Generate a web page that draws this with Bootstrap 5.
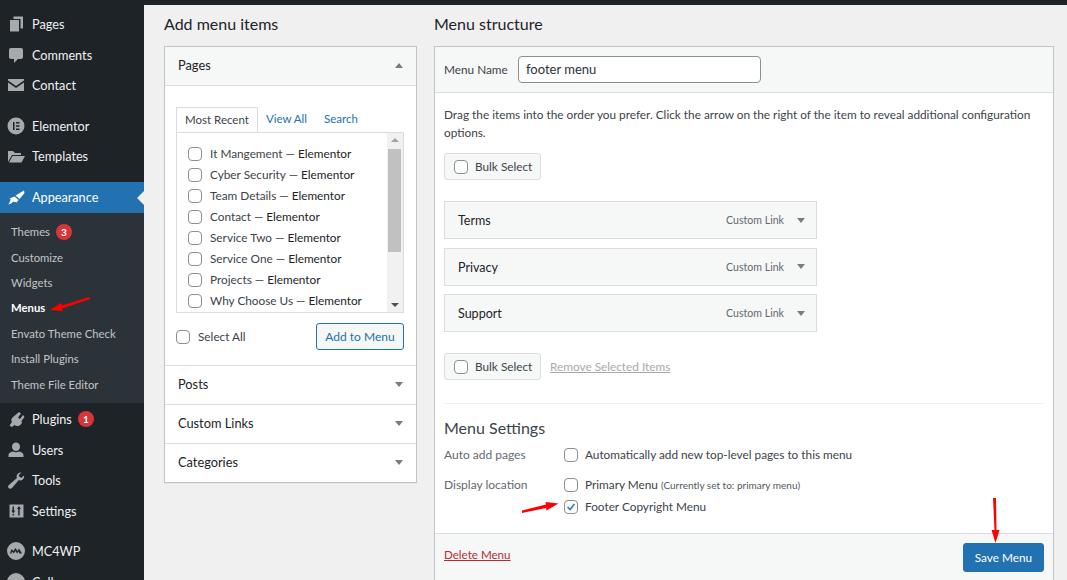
<!DOCTYPE html>
<html lang="en">
<head>
  <meta charset="UTF-8">
  <meta name="viewport" content="width=device-width, initial-scale=1.0">
  <title>Menus</title>
  <link href="https://cdn.jsdelivr.net/npm/bootstrap@5.3.3/dist/css/bootstrap.min.css" rel="stylesheet">
  <style>
    html, body { height: 100%; overflow: hidden; }
    body { background: #f0f0f1; color: #3c434a; font-family: "Lato", "Open Sans", sans-serif; font-size: 11.800px; line-height: 18px; }
    a { color: #2271b1; text-decoration: none; }
    .wp-top { height: 5px; background: #1d2327; }
    .wp-shell { height: 575px; position: relative; }

    .side { width: 144px; flex: none; background: #1d2327; color: #f0f0f1; padding-top: 4px; font-size: 12.700px; }
    .side-item { height: 30.500px; padding-left: 6px; gap: 6px; }
    .side-item svg { width: 20px; height: 20px; fill: #a7aaad; flex: none; }
    .side-gap { margin-top: 10px; }
    .side-active { background: #2271b1; color: #fff; position: relative; height: 31px; margin-top: 10px; }
    .side-active svg { fill: #fff; }
    .side-active::after { content: ""; position: absolute; right: 0; top: 9px; border: 7px solid transparent; border-right-color: #f0f0f1; border-left-width: 0; }
    .side-sub { background: #2c3338; color: #c3c4c7; padding: 7px 0 6px 11px; margin-bottom: 1px; font-size: 11.300px; }
    .side-sub > div { height: 25.400px; display: flex; align-items: center; gap: 6px; }
    .side-sub .cur { color: #fff; font-weight: 700; }
    .count-pill { width: 16px; height: 16px; border-radius: 50%; background: #d63638; color: #fff; font-size: 10px; font-weight: 700; line-height: 16px; text-align: center; padding: 0; }

    .main { padding: 9px 0 0 20px; }
    .col-left { width: 253px; margin-right: 17px; flex: none; }
    .col-right { width: 620px; flex: none; }
    .title { font-size: 16px; line-height: 20px; color: #1d2327; margin: 0 0 12px; font-weight: 400; height: 20px; }
    .panel { background: #fff; border: 1px solid #c3c4c7; border-radius: 0; box-shadow: 0 1px 1px rgba(0,0,0,.04); }
    .acc-head { height: 39px; padding: 0 13px 2px; font-size: 12.800px; color: #1d2327; border-top: 1px solid #dcdcde; }
    .acc-head.first { height: 39px; border-top: 0; background: #f6f7f7; border-bottom: 1px solid #dcdcde; }
    .arrow-dn, .arrow-up { width: 0; height: 0; border: 4px solid transparent; border-bottom-width: 0; border-top: 5px solid #787c82; }
    .arrow-up { border-top: 0; border-bottom: 5px solid #787c82; border-left-width: 4px; }
    .acc-body { padding: 21px 12px 15px 11px; height: 279px; }
    .tabbar { height: 25px; font-size: 11.500px; }
    .tabbar > * { padding: 0 8px; line-height: 24px; }
    .tabbar a { margin-right: 1px; }
    .tabbar .on { border: 1px solid #dcdcde; border-bottom: 0; background: #fff; height: 25px; margin-bottom: -1px; position: relative; color: #3c434a; }
    .picklist { height: 181px; border: 1px solid #dcdcde; padding: 10px 0 0 11px; position: relative; overflow: hidden; }
    .pick-row { height: 21px; gap: 8px; white-space: nowrap; }
    .pick-row b { font-weight: 400; color: #1d2327; }
    .sbar { position: absolute; right: 0; top: 0; bottom: 0; width: 16px; background: #f1f1f1; }
    .sbar i { position: absolute; left: 1px; top: 16px; width: 13px; height: 103px; background: #c1c1c1; }
    .sbar u { position: absolute; left: 4px; width: 0; height: 0; border: 4px solid transparent; }
    .sbar .up { top: 5px; border-top: 0; border-bottom: 4px solid #a3a3a3; }
    .sbar .dn { bottom: 5px; border-bottom: 0; border-top: 4px solid #505050; }
    .pick-foot { margin-top: 10px; }
    .form-check-input.wp-ck { width: 14px; height: 14px; margin: 0; border: 1px solid #8c8f94; border-radius: 4px; background-color: #fff; flex: none; float: none; }
    .form-check-input.wp-ck:checked { background-color: #fff; border-color: #8c8f94; background-image: url("data:image/svg+xml,%3Csvg xmlns='http://www.w3.org/2000/svg' viewBox='0 0 14 14'%3E%3Cpath d='M3 7l3 3 5-6.500' fill='none' stroke='%233582c4' stroke-width='2'/%3E%3C/svg%3E"); background-size: 100%; }
    .btn-outline-wp { font-size: 12px; line-height: 25px; padding: 0; width: 88px; height: 27px; border: 1px solid #2271b1; color: #2271b1; background: #f6f7f7; border-radius: 3px; white-space: nowrap; }

    .name-bar { height: 46px; background: #f6f7f7; border-bottom: 1px solid #dcdcde; padding: 0 9px; gap: 10px; }
    .name-bar label { width: 64px; white-space: nowrap; }
    .name-input { width: 243px; height: 27px; border: 1px solid #8c8f94; border-radius: 4px; padding: 0 7px; font-size: 13px; line-height: 25px; background: #fff; color: #2c3338; }
    .struct { padding: 13px 9px 0; height: 440px; }
    .struct p { margin: 0 0 11px; }
    .bulk { width: 97px; height: 27px; border: 1px solid #dcdcde; border-radius: 3px; background: #f6f7f7; padding-left: 9px; gap: 7px; }
    .bulk-gap { margin-bottom: 21px; }
    .menu-item { width: 373px; height: 38px; border: 1px solid #dcdcde; background: #f6f7f7; padding: 0 11px 0 13px; margin-bottom: 8.500px; color: #1d2327; }
    .menu-item span { font-size: 12.500px; color: #1d2327; padding-top: 2px; }
    .menu-item small { font-size: 10.600px; color: #646970; margin-right: 13px; }
    .rm-link { color: #a7aaad; text-decoration: underline; margin-left: 9px; }
    .bulk-row { margin-top: 21px; }
    .rule { border-top: 1px solid #f0f0f1; margin: 23px 0 14px; }
    .set-title { font-size: 16px; line-height: 19px; color: #3c434a; margin-bottom: 7px; }
    .set-row { min-height: 22px; }
    .set-label { width: 120px; flex: none; color: #646970; font-size: 12px; }
    .set-opt { gap: 7px; }
    .opt-note { font-size: 10px; color: #50575e; }
    .foot-bar { height: 50px; background: #f6f7f7; border-top: 1px solid #dcdcde; padding: 9px 9px 0; }
    .del-link { color: #b32d2e; text-decoration: underline; margin-top: 3px; font-size: 11.600px; }
    .btn-save { width: 81px; height: 29px; padding: 0; font-size: 11.800px; line-height: 27px; background: #2271b1; border: 1px solid #2271b1; color: #fff; border-radius: 3px; }
    .anno { position: absolute; left: 0; top: -5px; pointer-events: none; }
  </style>
</head>
<body>
  <div class="wp-top"></div>
  <div class="wp-shell d-flex">

    <!-- admin menu -->
    <div class="side">
      <div class="side-item d-flex align-items-center">
        <svg viewBox="0 0 20 20"><path d="M7.500 2.500H17v12h-2.500V5H7.500zM4 6h9v11.500H4z"/></svg>Pages
      </div>
      <div class="side-item d-flex align-items-center">
        <svg viewBox="0 0 20 20"><path d="M5 3h10a2 2 0 0 1 2 2v7a2 2 0 0 1-2 2h-3l-4 4v-4H5a2 2 0 0 1-2-2V5a2 2 0 0 1 2-2z"/></svg>Comments
      </div>
      <div class="side-item d-flex align-items-center">
        <svg viewBox="0 0 20 20"><path d="M2 4h16v1.500l-8 5.500-8-5.500zM2 7.500l8 5.500 8-5.500V16H2z"/></svg>Contact
      </div>
      <div class="side-item side-gap d-flex align-items-center">
        <svg viewBox="0 0 20 20"><path fill-rule="evenodd" d="M10 1.500a8.500 8.500 0 1 1 0 17 8.500 8.500 0 0 1 0-17zM7 6v8h1.500V6zm3 0v1.500h3.500V6zm0 3.200v1.500h3.500V9.200zm0 3.300V14h3.500v-1.500z"/></svg>Elementor
      </div>
      <div class="side-item d-flex align-items-center">
        <svg viewBox="0 0 20 20"><path d="M2 5h5l2 2h6v2H6l-4 7zM6.500 10H19l-3.500 6.500H3z"/></svg>Templates
      </div>
      <div class="side-active side-item d-flex align-items-center">
        <svg viewBox="0 0 20 20"><path d="M18 3.500l.5 2.500-5 6-4-3.500zM8.500 9.500l4 3.500-2 2.500-1.500-.7-.7.5-1-.8c-1.300 1.500-2.800 2.500-5 3 1-1.500 1.800-3 2.400-5L3.500 11.500z"/></svg>Appearance
      </div>
      <div class="side-sub">
        <div>Themes <span class="count-pill">3</span></div>
        <div>Customize</div>
        <div>Widgets</div>
        <div class="cur">Menus</div>
        <div>Envato Theme Check</div>
        <div>Install Plugins</div>
        <div>Theme File Editor</div>
      </div>
      <div class="side-item d-flex align-items-center">
        <svg viewBox="0 0 20 20"><path d="M13 3l2 1.500-3 4 2 1.500 3-4 1.500 2-3 4c1 1.500 0 3.500-2 4.500s-3.500.5-5-.5L6 18l-2.500-1.500L6 13c-1-1.500-1-3 .5-4.500z"/></svg>Plugins <span class="count-pill">1</span>
      </div>
      <div class="side-item d-flex align-items-center">
        <svg viewBox="0 0 20 20"><path d="M10 2.500a4 4 0 0 1 4 4.200c0 2.300-1.700 4.300-4 4.300S6 9 6 6.700a4 4 0 0 1 4-4.200zM2.500 17v-2c0-2 3-3.300 4.500-3.500 1.500 1 4.500 1 6 0 1.500.2 4.500 1.500 4.500 3.500v2z"/></svg>Users
      </div>
      <div class="side-item d-flex align-items-center">
        <svg viewBox="0 0 20 20"><path d="M18 5.500c.5 2-.5 4-2.500 4.700-1 .3-2 .2-2.700-.1L6 18c-1 1-2.500 1-3.300.1-.9-1-.8-2.300.2-3.200l8-7c-.4-.9-.4-2 0-3 .8-1.700 2.600-2.700 4.600-2.300L12.800 5l.7 2 2 .7z"/></svg>Tools
      </div>
      <div class="side-item d-flex align-items-center">
        <svg viewBox="0 0 20 20"><path fill-rule="evenodd" d="M3.500 3.500h14v13h-14zM6.500 5.500v4H5.300l2 3 1.900-3H8v-4zM13 5l-2 3h1.200v6.500h1.500V8H15zM6.500 13v1.500H8V13z"/></svg>Settings
      </div>
      <div class="side-item side-gap d-flex align-items-center">
        <svg viewBox="0 0 20 20"><path fill-rule="evenodd" d="M10 1a9 9 0 1 1 0 18 9 9 0 0 1 0-18zM4 12.500l1.500-4.500 2 2L9.500 7l2 3 1.500-2.500 3 5h-2.500L12.500 10.500l-1.300 2L9.300 10l-1.500 2.500L6 10.500l-.5 2z"/></svg>MC4WP
      </div>
      <div class="side-item d-flex align-items-center">
        <svg viewBox="0 0 20 20"><circle cx="10" cy="10" r="9"/></svg>Collapse
      </div>
    </div>

    <div class="main d-flex">
      <!-- left column -->
      <div class="col-left">
        <h2 class="title">Add menu items</h2>
        <div class="panel">
          <div class="acc-head first d-flex align-items-center justify-content-between">Pages<span class="arrow-up"></span></div>
          <div class="acc-body">
            <div class="tabbar d-flex">
              <div class="on">Most Recent</div>
              <a href="#">View All</a>
              <a href="#">Search</a>
            </div>
            <div class="picklist">
              <div class="pick-row d-flex align-items-center"><input class="form-check-input wp-ck" type="checkbox"><div>It Mangement — <b>Elementor</b></div></div>
              <div class="pick-row d-flex align-items-center"><input class="form-check-input wp-ck" type="checkbox"><div>Cyber Security — <b>Elementor</b></div></div>
              <div class="pick-row d-flex align-items-center"><input class="form-check-input wp-ck" type="checkbox"><div>Team Details — <b>Elementor</b></div></div>
              <div class="pick-row d-flex align-items-center"><input class="form-check-input wp-ck" type="checkbox"><div>Contact — <b>Elementor</b></div></div>
              <div class="pick-row d-flex align-items-center"><input class="form-check-input wp-ck" type="checkbox"><div>Service Two — <b>Elementor</b></div></div>
              <div class="pick-row d-flex align-items-center"><input class="form-check-input wp-ck" type="checkbox"><div>Service One — <b>Elementor</b></div></div>
              <div class="pick-row d-flex align-items-center"><input class="form-check-input wp-ck" type="checkbox"><div>Projects — <b>Elementor</b></div></div>
              <div class="pick-row d-flex align-items-center"><input class="form-check-input wp-ck" type="checkbox"><div>Why Choose Us — <b>Elementor</b></div></div>
              <div class="sbar"><u class="up"></u><i></i><u class="dn"></u></div>
            </div>
            <div class="pick-foot d-flex align-items-center justify-content-between">
              <div class="d-flex align-items-center gap-2"><input class="form-check-input wp-ck" type="checkbox">Select All</div>
              <button class="btn btn-outline-wp" type="button">Add to Menu</button>
            </div>
          </div>
          <div class="acc-head d-flex align-items-center justify-content-between">Posts<span class="arrow-dn"></span></div>
          <div class="acc-head d-flex align-items-center justify-content-between">Custom Links<span class="arrow-dn"></span></div>
          <div class="acc-head d-flex align-items-center justify-content-between">Categories<span class="arrow-dn"></span></div>
        </div>
      </div>

      <!-- right column -->
      <div class="col-right">
        <h2 class="title">Menu structure</h2>
        <div class="panel">
          <div class="name-bar d-flex align-items-center">
            <label>Menu Name</label>
            <div class="name-input">footer menu</div>
          </div>
          <div class="struct">
            <p>Drag the items into the order you prefer. Click the arrow on the right of the item to reveal additional configuration options.</p>
            <div class="bulk bulk-gap d-flex align-items-center"><input class="form-check-input wp-ck" type="checkbox">Bulk Select</div>

            <div class="menu-item d-flex align-items-center justify-content-between"><span>Terms</span><div class="d-flex align-items-center"><small>Custom Link</small><i class="arrow-dn"></i></div></div>
            <div class="menu-item d-flex align-items-center justify-content-between"><span>Privacy</span><div class="d-flex align-items-center"><small>Custom Link</small><i class="arrow-dn"></i></div></div>
            <div class="menu-item d-flex align-items-center justify-content-between"><span>Support</span><div class="d-flex align-items-center"><small>Custom Link</small><i class="arrow-dn"></i></div></div>

            <div class="bulk-row d-flex align-items-center">
              <div class="bulk d-flex align-items-center"><input class="form-check-input wp-ck" type="checkbox">Bulk Select</div>
              <a class="rm-link" href="#">Remove Selected Items</a>
            </div>
            <div class="rule"></div>
            <div class="set-title">Menu Settings</div>
            <div class="set-row d-flex align-items-center"><div class="set-label">Auto add pages</div><div class="set-opt d-flex align-items-center"><input class="form-check-input wp-ck" type="checkbox">Automatically add new top-level pages to this menu</div></div>
            <div class="set-row d-flex align-items-center mt-2"><div class="set-label">Display location</div><div class="set-opt d-flex align-items-center"><input class="form-check-input wp-ck" type="checkbox"><div>Primary Menu <span class="opt-note">(Currently set to: primary menu)</span></div></div></div>
            <div class="set-row d-flex align-items-center"><div class="set-label"></div><div class="set-opt d-flex align-items-center"><input class="form-check-input wp-ck" type="checkbox" checked>Footer Copyright Menu</div></div>
          </div>
          <div class="foot-bar d-flex justify-content-between">
            <a class="del-link" href="#">Delete Menu</a>
            <button class="btn btn-save" type="button">Save Menu</button>
          </div>
        </div>
      </div>
    </div>

    <!-- red annotation arrows -->
    <svg class="anno" width="1067" height="580" viewBox="0 0 1067 580">
      <path d="M89 297L62 305.500l-1-2.500-11 7 13 1-.7-2.500L90 299z" fill="#f00"/>
      <path d="M522 513l24-5 .5 2.500 12-7-13-1.500.5 2.500-24 6z" fill="#f00"/>
      <path d="M993 498h3l.5 32h3l-4 13-4-13h3z" fill="#f00"/>
    </svg>
  </div>

  <script src="https://cdn.jsdelivr.net/npm/bootstrap@5.3.3/dist/js/bootstrap.bundle.min.js"></script>
</body>
</html>
